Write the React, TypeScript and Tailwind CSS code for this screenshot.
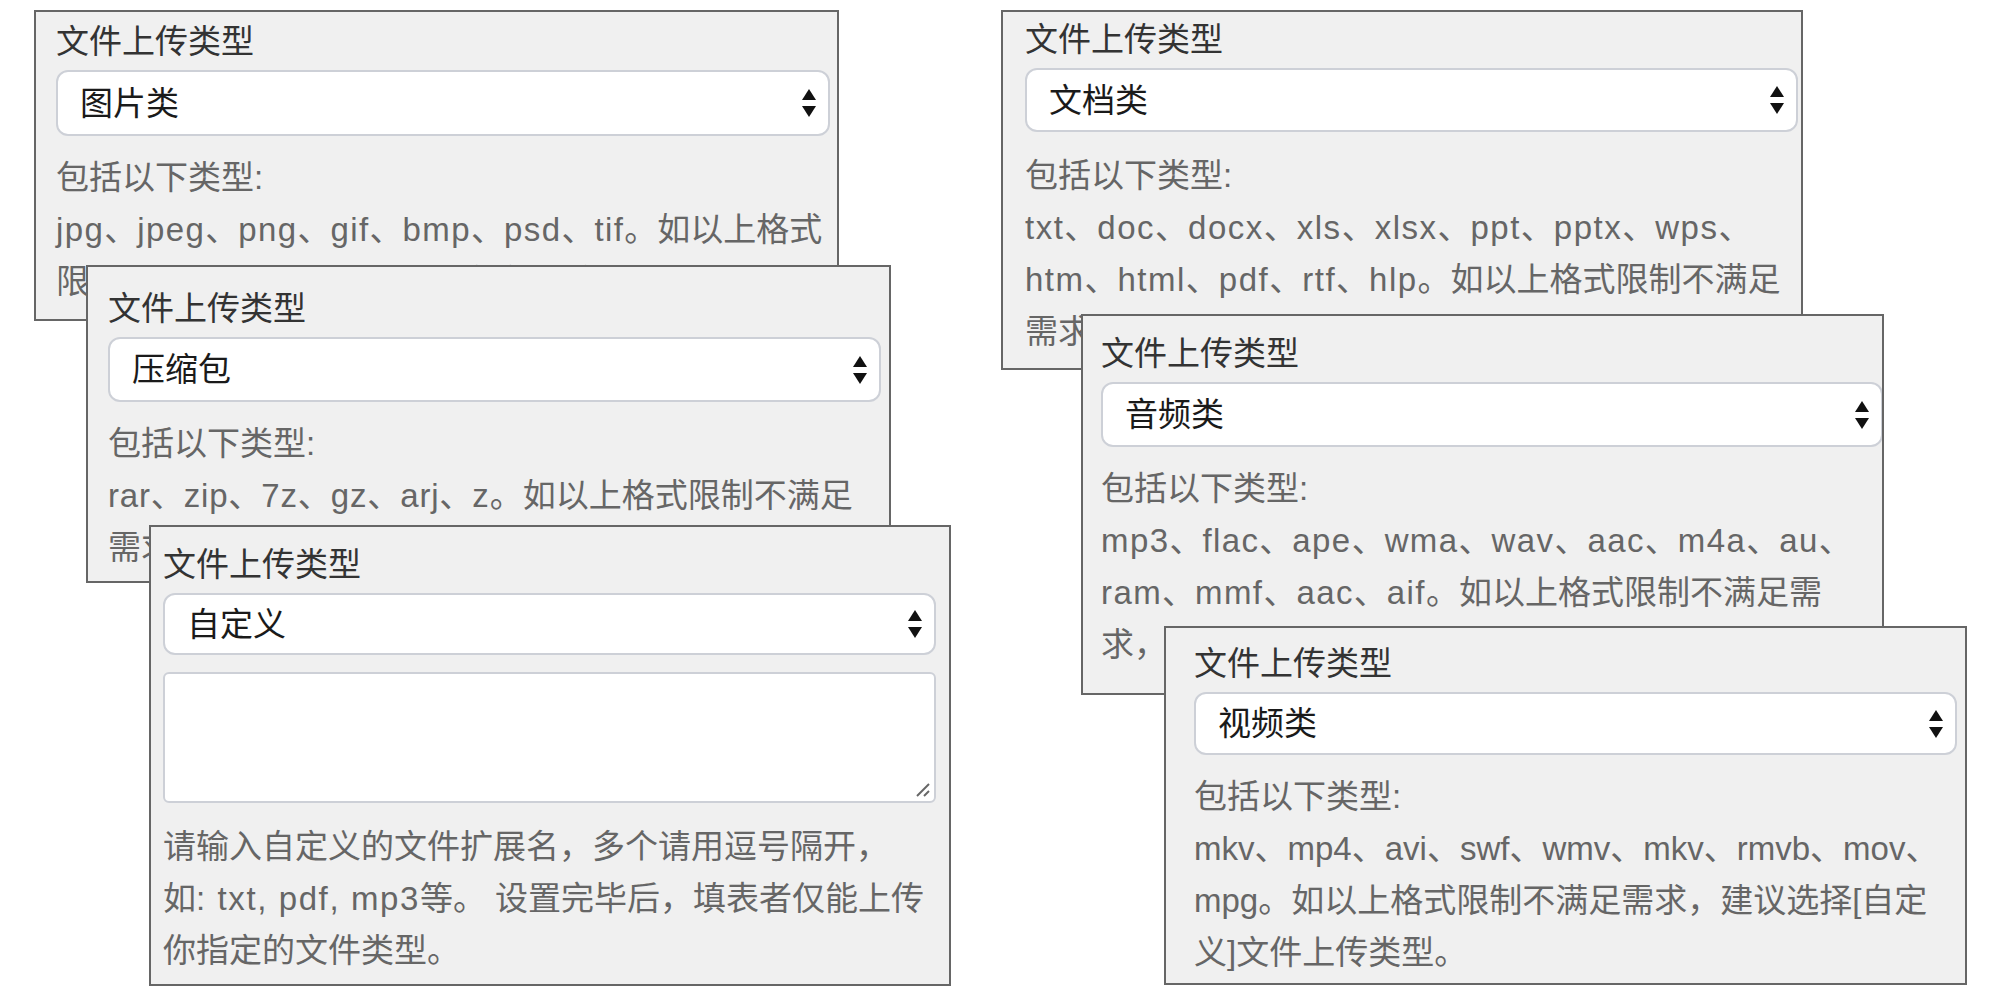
const font = { fontFamily: '"Liberation Sans", "Noto Sans CJK SC", sans-serif' }

const cards = [
  {
    pos: 'left-[34px] top-[10px] w-[805px] h-[311px]',
    pad: 'pl-[20px] pt-[8px]',
    sel: 'w-[774px] h-[66px]',
    latin: 'tracking-[1.4px]',
    gap: 'mt-[16px]',
    value: '图片类',
    lines: ['包括以下类型:', 'jpg、jpeg、png、gif、bmp、psd、tif。如以上格式', '限制不满足需求，建议选择[自定义]文件上传类型。'],
  },
  {
    pos: 'left-[86px] top-[265px] w-[805px] h-[318px]',
    pad: 'pl-[20px] pt-[20px]',
    sel: 'w-[773px] h-[65px]',
    latin: 'tracking-[0.8px]',
    gap: 'mt-[16px]',
    value: '压缩包',
    lines: ['包括以下类型:', 'rar、zip、7z、gz、arj、z。如以上格式限制不满足', '需求，建议选择[自定义]文件上传类型。'],
  },
  {
    pos: 'left-[149px] top-[525px] w-[802px] h-[461px]',
    pad: 'pl-[12px] pt-[16px]',
    sel: 'w-[773px] h-[62px]',
    latin: 'tracking-[1.6px]',
    gap: 'mt-[18px]',
    value: '自定义',
    custom: true,
    lines: ['请输入自定义的文件扩展名，多个请用逗号隔开，', '如: txt, pdf, mp3等。 设置完毕后，填表者仅能上传', '你指定的文件类型。'],
  },
  {
    pos: 'left-[1001px] top-[10px] w-[802px] h-[360px]',
    pad: 'pl-[22px] pt-[6px]',
    sel: 'w-[773px] h-[64px]',
    latin: 'tracking-[1.5px]',
    gap: 'mt-[18px]',
    value: '文档类',
    lines: ['包括以下类型:', 'txt、doc、docx、xls、xlsx、ppt、pptx、wps、', 'htm、html、pdf、rtf、hlp。如以上格式限制不满足', '需求，建议选择[自定义]文件上传类型。'],
  },
  {
    pos: 'left-[1081px] top-[314px] w-[803px] h-[381px]',
    pad: 'pl-[18px] pt-[16px]',
    sel: 'w-[782px] h-[65px]',
    latin: 'tracking-[1.4px]',
    gap: 'mt-[16px]',
    value: '音频类',
    lines: ['包括以下类型:', 'mp3、flac、ape、wma、wav、aac、m4a、au、', 'ram、mmf、aac、aif。如以上格式限制不满足需', '求，建议选择[自定义]文件上传类型。'],
  },
  {
    pos: 'left-[1164px] top-[626px] w-[803px] h-[359px]',
    pad: 'pl-[28px] pt-[14px]',
    sel: 'w-[763px] h-[63px]',
    latin: 'tracking-normal',
    gap: 'mt-[16px]',
    value: '视频类',
    lines: ['包括以下类型:', 'mkv、mp4、avi、swf、wmv、mkv、rmvb、mov、', 'mpg。如以上格式限制不满足需求，建议选择[自定', '义]文件上传类型。'],
  },
]

function Arrows() {
  return (
    <svg width="14" height="28" viewBox="0 0 14 28" className="shrink-0">
      <polygon points="7,0 14,11 0,11" fill="#111" />
      <polygon points="0,17 14,17 7,28" fill="#111" />
    </svg>
  )
}

// latin runs get a touch of spacing so widths match the screenshot
function Line({ text, latin }: { text: string; latin: string }) {
  const parts = text.split(/([A-Za-z0-9:,.]+(?: [A-Za-z0-9:,.]+)*)/)
  return (
    <div className="text-[33px] leading-[52px] text-[#666] whitespace-nowrap">
      {parts.map((p, i) => (i % 2 ? <span key={i} className={latin}>{p}</span> : <span key={i}>{p}</span>))}
    </div>
  )
}

function Card({ c }: { c: (typeof cards)[number] }) {
  return (
    <div className={`absolute overflow-hidden bg-[#f0f0f0] border-2 border-[#666] ${c.pos} ${c.pad}`} style={font}>
      <div className="text-[33px] leading-[44px] text-[#333] whitespace-nowrap">文件上传类型</div>
      <div className={`mt-[6px] flex items-center justify-between rounded-[12px] border-2 border-[#cdd0d7] bg-white pl-[22px] pr-[12px] ${c.sel}`}>
        <span className="text-[33px] leading-none text-[#1a1a1a]">{c.value}</span>
        <Arrows />
      </div>
      {c.custom && (
        <div className="relative mt-[17px] w-[773px] h-[131px] rounded-[6px] border-2 border-[#cdd0d7] bg-white">
          <svg width="16" height="16" viewBox="0 0 16 16" className="absolute right-[3px] bottom-[3px]">
            <line x1="2" y1="14" x2="14" y2="2" stroke="#666" strokeWidth="2" />
            <line x1="9" y1="14" x2="14" y2="9" stroke="#666" strokeWidth="2" />
          </svg>
        </div>
      )}
      <div className={c.gap}>
        {c.lines.map((l, i) => <Line key={i} text={l} latin={c.latin} />)}
      </div>
    </div>
  )
}

export default function App() {
  return (
    <div className="relative w-[2000px] h-[1000px] bg-white overflow-hidden">
      {cards.map((c, i) => <Card key={i} c={c} />)}
    </div>
  )
}
